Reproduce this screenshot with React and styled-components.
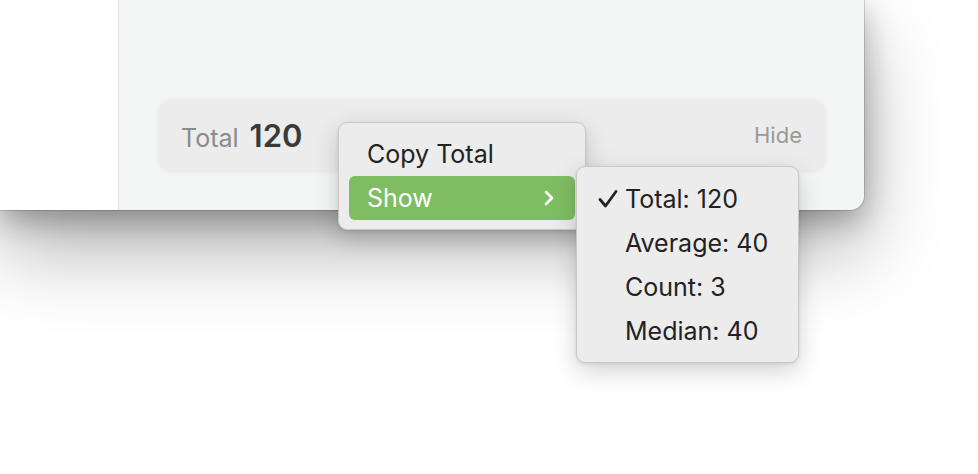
import React from "react";
import styled, { createGlobalStyle } from "styled-components";

const GlobalStyle = createGlobalStyle`
  html, body {
    margin: 0;
    padding: 0;
    background: #ffffff;
    font-family: Inter, "Noto Sans", sans-serif;
    -webkit-font-smoothing: antialiased;
  }
`;

const stats = [
  { label: "Total: 120", checked: true },
  { label: "Average: 40" },
  { label: "Count: 3" },
  { label: "Median: 40" },
];

export default function App() {
  return (
    <>
      <GlobalStyle />
      <Stage>
        <Window>
          <Sidebar />
          <Content>
            <StatusBar>
              <Summary>
                <SummaryLabel>Total</SummaryLabel>
                <SummaryValue>120</SummaryValue>
              </Summary>
              <HideButton>Hide</HideButton>
            </StatusBar>
          </Content>
        </Window>

        <ContextMenu>
          <MenuItem>Copy Total</MenuItem>
          <MenuItem $active>
            Show
            <svg width="14" height="18" viewBox="0 0 14 18">
              <path
                d="M4 3 L10 9 L4 15"
                fill="none"
                stroke="#ffffff"
                strokeWidth="2.6"
                strokeLinecap="round"
                strokeLinejoin="round"
              />
            </svg>
          </MenuItem>
        </ContextMenu>

        <SubMenu>
          {stats.map((s) => (
            <SubItem key={s.label}>
              <Check>
                {s.checked && (
                  <svg width="22" height="20" viewBox="0 0 22 20">
                    <path
                      d="M3 10.5 L8.5 17 L19 2.5"
                      fill="none"
                      stroke="#222"
                      strokeWidth="2.8"
                      strokeLinecap="round"
                      strokeLinejoin="round"
                    />
                  </svg>
                )}
              </Check>
              {s.label}
            </SubItem>
          ))}
        </SubMenu>
      </Stage>
    </>
  );
}

const Stage = styled.div`
  position: relative;
  width: 978px;
  height: 474px;
  overflow: hidden;
  background: #ffffff;
`;

const Window = styled.div`
  width: 864px;
  height: 210px;
  display: flex;
  background: #f4f5f5;
  border-bottom-right-radius: 14px;
  box-shadow: 0 40px 80px rgba(0, 0, 0, 0.3), 0 10px 30px rgba(0, 0, 0, 0.28),
    0 0 0 1px rgba(0, 0, 0, 0.14);
`;

const Sidebar = styled.div`
  width: 118px;
  background: #ffffff;
  border-right: 1px solid #dedede;
`;

const Content = styled.div`
  flex: 1;
  display: flex;
  flex-direction: column;
  justify-content: flex-end;
  padding: 0 40px 40px 41px;
`;

const StatusBar = styled.div`
  height: 70px;
  display: flex;
  align-items: center;
  justify-content: space-between;
  padding: 0 22px 0 21px;
  background: #ececec;
  border-radius: 9px;
  box-shadow: 0 1px 6px rgba(0, 0, 0, 0.08);
`;

const Summary = styled.div`
  display: flex;
  align-items: baseline;
  gap: 11px;
`;

const SummaryLabel = styled.span`
  font-size: 25px;
  color: #8a8a8a;
`;

const SummaryValue = styled.span`
  font-size: 31px;
  font-weight: 600;
  color: #3a3a3a;
`;

const HideButton = styled.span`
  font-size: 22px;
  color: #9a9a9a;
`;

const MenuPanel = styled.div`
  position: absolute;
  background: #ececec;
  border: 1px solid #c9c9c9;
  border-radius: 9px;
  box-shadow: 0 8px 24px rgba(0, 0, 0, 0.18), 0 1px 3px rgba(0, 0, 0, 0.1);
  box-sizing: border-box;
`;

const ContextMenu = styled(MenuPanel)`
  left: 338px;
  top: 122px;
  width: 248px;
  padding: 9px 10px;
`;

const MenuItem = styled.div`
  height: 44px;
  display: flex;
  align-items: center;
  justify-content: space-between;
  padding: 0 19px 0 18px;
  border-radius: 6px;
  font-size: 25px;
  color: ${(p) => (p.$active ? "#ffffff" : "#222222")};
  background: ${(p) => (p.$active ? "#7fbd63" : "transparent")};
`;

const SubMenu = styled(MenuPanel)`
  left: 576px;
  top: 166px;
  width: 223px;
  padding: 10px 0 9px;
`;

const SubItem = styled.div`
  height: 44px;
  display: flex;
  align-items: center;
  padding-left: 20px;
  font-size: 25px;
  color: #222222;
`;

const Check = styled.span`
  width: 28px;
  display: flex;
  align-items: center;
`;
